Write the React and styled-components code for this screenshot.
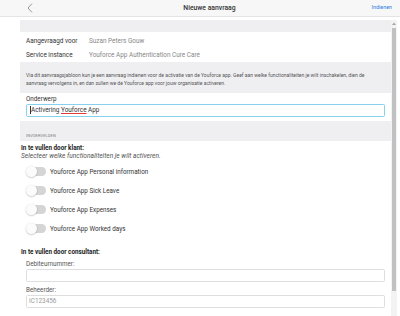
import React from "react";
import styled, { createGlobalStyle } from "styled-components";

const GlobalStyle = createGlobalStyle`
  html, body { margin: 0; padding: 0; background: #fff; }
  body { font-family: Roboto, "Noto Sans", sans-serif; width: 400px; height: 316px; overflow: hidden; }
  * { box-sizing: border-box; }
`;

const Page = styled.div`
  display: flex;
  flex-direction: column;
  height: 316px;
`;

const Header = styled.header`
  height: 17px;
  flex: none;
  background: #f7f7f7;
  border-bottom: 1px solid #e4e4e4;
  display: grid;
  grid-template-columns: 1fr auto 1fr;
  align-items: center;
  padding: 0 8px 0 27px;
`;

const BackButton = styled.div`
  display: flex;
  align-items: center;
  justify-self: start;
`;

const Title = styled.div`
  font-size: 6.8px;
  color: #333;
  font-weight: 500;
  line-height: 1;
`;

const Action = styled.div`
  justify-self: end;
  font-size: 5.4px;
  color: #2d7fe0;
  line-height: 1;
`;

const Body = styled.div`
  flex: 1;
  display: flex;
  padding-top: 3px;
  min-height: 0;
`;

const Content = styled.main`
  flex: 1;
  padding-left: 20px;
  display: flex;
  flex-direction: column;
`;

const Band = styled.div`
  background: #efeff2;
  height: ${(p) => p.$h || 12}px;
`;

const InfoList = styled.div`
  padding-top: 2px;
`;

const InfoRow = styled.div`
  height: 14px;
  display: grid;
  grid-template-columns: 63px 1fr;
  align-items: center;
  padding-left: 6px;
  font-size: 6.4px;
`;

const InfoLabel = styled.span`
  color: #333;
`;

const InfoValue = styled.span`
  color: #888;
`;

const Description = styled.div`
  background: #efeff2;
  padding: 9px 6px 5px;
  font-size: 5px;
  line-height: 8.3px;
  color: #555;
`;

const FieldBlock = styled.div`
  padding: ${(p) => p.$pad || "0"};
  padding-left: 6px;
  padding-right: 6px;
`;

const FieldLabel = styled.div`
  font-size: 6.3px;
  line-height: 7px;
  color: ${(p) => (p.$dark ? "#333" : "#555")};
  margin-bottom: 1px;
`;

const TextBox = styled.div`
  height: 13px;
  border: 1px solid ${(p) => (p.$focused ? "#86d2ee" : "#dedede")};
  border-radius: 1.5px;
  display: flex;
  align-items: center;
  padding-left: ${(p) => (p.$focused ? "3px" : "2px")};
  font-size: 6.4px;
  color: ${(p) => (p.$muted ? "#999" : "#333")};
  white-space: pre;
`;

const Caret = styled.span`
  width: 0.6px;
  height: 8px;
  background: #333;
  margin-right: 0.4px;
`;

const Misspelled = styled.span`
  text-decoration: underline solid #e53935;
  text-decoration-thickness: 0.7px;
  text-underline-offset: 1.2px;
`;

const SectionBand = styled.div`
  background: #efeff2;
  height: 20px;
  padding: 12px 6px 0;
  font-size: 4px;
  line-height: 5px;
  letter-spacing: 0.1px;
  color: #808080;
  text-transform: uppercase;
`;

const GroupTitle = styled.div`
  font-size: 6.3px;
  font-weight: 700;
  line-height: 8px;
  color: #222;
  padding-left: 1px;
  margin-top: ${(p) => p.$mt || 0}px;
`;

const Hint = styled.div`
  font-size: 6.6px;
  font-style: italic;
  line-height: 8px;
  color: #555;
  padding-left: 1px;
`;

const ToggleList = styled.div`
  padding: 2.5px 0 0 6px;
  display: flex;
  flex-direction: column;
`;

const ToggleRow = styled.div`
  height: 19px;
  display: flex;
  align-items: center;
  gap: 4px;
  font-size: 6.3px;
  color: #333;
`;

const Switch = styled.span`
  position: relative;
  width: 20px;
  height: 10.5px;
  display: inline-flex;
  align-items: center;
  flex: none;
`;

const Track = styled.span`
  margin-left: 2px;
  width: 18px;
  height: 8.5px;
  border-radius: 4.25px;
  background: #d5d5d5;
`;

const Knob = styled.span`
  position: absolute;
  left: 0;
  top: 0;
  width: 10.5px;
  height: 10.5px;
  border-radius: 50%;
  background: #fbfbfb;
  box-shadow: 0 0.5px 1.5px rgba(0, 0, 0, 0.3);
`;

const ConsultantFields = styled.div`
  display: flex;
  flex-direction: column;
  gap: 5px;
  margin-top: 5px;
`;

const ScrollRail = styled.div`
  width: 6px;
  margin-right: 3px;
  background: #f3f3f3;
  display: flex;
  flex-direction: column;
  align-items: center;
`;

const ScrollArrow = styled.div`
  height: 5px;
  display: flex;
  align-items: center;
  margin-top: 1px;
`;

const ScrollThumb = styled.div`
  width: 4px;
  height: 263px;
  margin-top: 2px;
  background: #c1c1c1;
`;

const toggles = [
  "Youforce App Personal information",
  "Youforce App Sick Leave",
  "Youforce App Expenses",
  "Youforce App Worked days",
];

export default function App() {
  return (
    <>
      <GlobalStyle />
      <Page>
        <Header>
          <BackButton>
            <svg width="6" height="10" viewBox="0 0 6 10">
              <path d="M5 0.6 L1 5 L5 9.4" fill="none" stroke="#808080" strokeWidth="0.8" />
            </svg>
          </BackButton>
          <Title>Nieuwe aanvraag</Title>
          <Action>Indienen</Action>
        </Header>
        <Body>
          <Content>
            <Band $h={12} />
            <InfoList>
              <InfoRow>
                <InfoLabel>Aangevraagd voor</InfoLabel>
                <InfoValue>Suzan Peters Gouw</InfoValue>
              </InfoRow>
              <InfoRow>
                <InfoLabel>Service instance</InfoLabel>
                <InfoValue>Youforce App Authentication Cure Care</InfoValue>
              </InfoRow>
            </InfoList>
            <Description>
              Via dit aanvraagsjabloon kun je een aanvraag indienen voor de activatie van de Youforce app. Geef aan welke functionaliteiten je wilt inschakelen, dien de aanvraag vervolgens in, en dan zullen we de Youforce app voor jouw organisatie activeren.
            </Description>
            <FieldBlock $pad="3px 0 4px">
              <FieldLabel $dark>Onderwerp</FieldLabel>
              <TextBox $focused>
                <Caret />
                Activering <Misspelled>Youforce</Misspelled> App
              </TextBox>
            </FieldBlock>
            <SectionBand>Invoervelden</SectionBand>
            <GroupTitle $mt={3}>In te vullen door klant:</GroupTitle>
            <Hint>Selecteer welke functionaliteiten je wilt activeren.</Hint>
            <ToggleList>
              {toggles.map((t) => (
                <ToggleRow key={t}>
                  <Switch>
                    <Track />
                    <Knob />
                  </Switch>
                  {t}
                </ToggleRow>
              ))}
            </ToggleList>
            <GroupTitle $mt={9.5}>In te vullen door consultant:</GroupTitle>
            <ConsultantFields>
              <FieldBlock>
                <FieldLabel>Debiteurnummer:</FieldLabel>
                <TextBox />
              </FieldBlock>
              <FieldBlock>
                <FieldLabel>Beheerder:</FieldLabel>
                <TextBox $muted>IC123456</TextBox>
              </FieldBlock>
            </ConsultantFields>
          </Content>
          <ScrollRail>
            <ScrollArrow>
              <svg width="4" height="3" viewBox="0 0 4 3">
                <path d="M0 3 L2 0.5 L4 3 Z" fill="#a3a3a3" />
              </svg>
            </ScrollArrow>
            <ScrollThumb />
          </ScrollRail>
        </Body>
      </Page>
    </>
  );
}
